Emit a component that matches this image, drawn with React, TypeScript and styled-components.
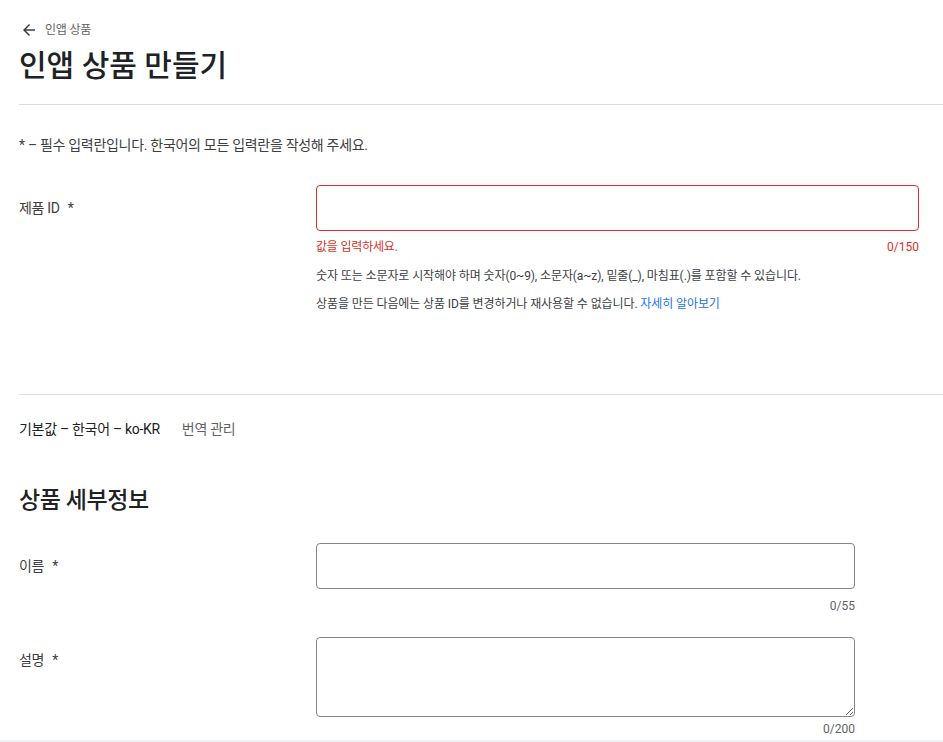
import styled, { createGlobalStyle } from 'styled-components';

const GlobalStyle = createGlobalStyle`
  html, body {
    margin: 0;
    padding: 0;
    background: #ffffff;
  }
  body {
    font-family: Roboto, "Noto Sans CJK KR", sans-serif;
    color: #3c4043;
    overflow: hidden;
  }
  * {
    box-sizing: border-box;
  }
`;

const Page = styled.div`
  height: 742px;
  display: flex;
  flex-direction: column;
`;

const Content = styled.main`
  padding-left: 19px;
  flex: 1;
`;

const BackLink = styled.a`
  display: flex;
  align-items: center;
  gap: 7px;
  margin-top: 21px;
  margin-left: 1px;
  font-size: 12px;
  line-height: 16px;
  letter-spacing: -0.2px;
  color: #5f6368;
  text-decoration: none;
`;

const Title = styled.h1`
  margin: 9px 0 0;
  font-size: 30px;
  line-height: 36px;
  font-weight: 500;
  color: #202124;
`;

const Divider = styled.hr<{ $top: number }>`
  margin: ${(p) => p.$top}px 0 0;
  border: none;
  border-top: 1px solid #dadce0;
`;

const Note = styled.p`
  margin: 30px 0 0;
  font-size: 14px;
  line-height: 20px;
  letter-spacing: -0.3px;
  color: #3c4043;
`;

const FieldRow = styled.div<{ $top: number }>`
  display: grid;
  grid-template-columns: 297px 1fr;
  margin-top: ${(p) => p.$top}px;
`;

const Label = styled.label`
  padding-top: 13px;
  font-size: 14px;
  line-height: 20px;
  letter-spacing: -0.3px;
  color: #3c4043;

  span {
    margin-left: 8px;
  }
`;

const Field = styled.div<{ $width: number }>`
  width: ${(p) => p.$width}px;
  display: flex;
  flex-direction: column;
`;

const Input = styled.input<{ $error?: boolean }>`
  display: block;
  width: 100%;
  height: 46px;
  border: 1px solid ${(p) => (p.$error ? '#d93025' : '#80868b')};
  border-radius: 4px;
  padding: 0 12px;
  font: inherit;
  outline: none;
`;

const TextArea = styled.textarea`
  display: block;
  width: 100%;
  height: 80px;
  border: 1px solid #80868b;
  border-radius: 4px;
  padding: 10px 12px;
  font: inherit;
  outline: none;
  resize: vertical;
`;

const MetaRow = styled.div<{ $top: number; $error?: boolean }>`
  display: flex;
  justify-content: space-between;
  margin-top: ${(p) => p.$top}px;
  font-size: 12px;
  line-height: 16px;
  letter-spacing: -0.2px;
  color: ${(p) => (p.$error ? '#d93025' : '#5f6368')};
`;

const Counter = styled.span`
  margin-left: auto;
  letter-spacing: 0;
`;

const Help = styled.p<{ $top: number }>`
  margin: ${(p) => p.$top}px 0 0;
  font-size: 12px;
  line-height: 16px;
  letter-spacing: -0.1px;
  color: #3c4043;

  a {
    color: #1a73e8;
    text-decoration: none;
  }
`;

const LangRow = styled.div`
  display: flex;
  gap: 22px;
  margin-top: 24px;
  font-size: 14px;
  line-height: 20px;
  letter-spacing: -0.3px;
  color: #202124;
`;

const LangLink = styled.a`
  color: #5f6368;
  text-decoration: none;
`;

const SectionTitle = styled.h2`
  margin: 46px 0 0;
  font-size: 23px;
  line-height: 32px;
  font-weight: 500;
  letter-spacing: -0.4px;
  color: #202124;
`;

const Footer = styled.footer`
  height: 2px;
  background: #f1f3f4;
`;

function ArrowBack() {
  return (
    <svg width="18" height="18" viewBox="0 0 24 24" fill="#3c4043">
      <path d="M20 11H7.83l5.59-5.59L12 4l-8 8 8 8 1.41-1.41L7.83 13H20v-2z" />
    </svg>
  );
}

export default function App() {
  return (
    <Page>
      <GlobalStyle />
      <Content>
        <BackLink href="#">
          <ArrowBack />
          인앱 상품
        </BackLink>
        <Title>인앱 상품 만들기</Title>
        <Divider $top={20} />

        <Note>* – 필수 입력란입니다. 한국어의 모든 입력란을 작성해 주세요.</Note>

        <FieldRow $top={30}>
          <Label>
            제품 ID<span>*</span>
          </Label>
          <Field $width={603}>
            <Input $error />
            <MetaRow $top={8} $error>
              <span>값을 입력하세요.</span>
              <Counter>0/150</Counter>
            </MetaRow>
            <Help $top={13}>
              숫자 또는 소문자로 시작해야 하며 숫자(0~9), 소문자(a~z), 밑줄(_), 마침표(.)를 포함할 수 있습니다.
            </Help>
            <Help $top={12}>
              상품을 만든 다음에는 상품 ID를 변경하거나 재사용할 수 없습니다. <a href="#">자세히 알아보기</a>
            </Help>
          </Field>
        </FieldRow>

        <Divider $top={82} />

        <LangRow>
          <span>기본값 – 한국어 – ko-KR</span>
          <LangLink href="#">번역 관리</LangLink>
        </LangRow>

        <SectionTitle>상품 세부정보</SectionTitle>

        <FieldRow $top={26}>
          <Label>
            이름<span>*</span>
          </Label>
          <Field $width={539}>
            <Input />
            <MetaRow $top={9}>
              <Counter>0/55</Counter>
            </MetaRow>
          </Field>
        </FieldRow>

        <FieldRow $top={23}>
          <Label>
            설명<span>*</span>
          </Label>
          <Field $width={539}>
            <TextArea />
            <MetaRow $top={4}>
              <Counter>0/200</Counter>
            </MetaRow>
          </Field>
        </FieldRow>
      </Content>
      <Footer />
    </Page>
  );
}
